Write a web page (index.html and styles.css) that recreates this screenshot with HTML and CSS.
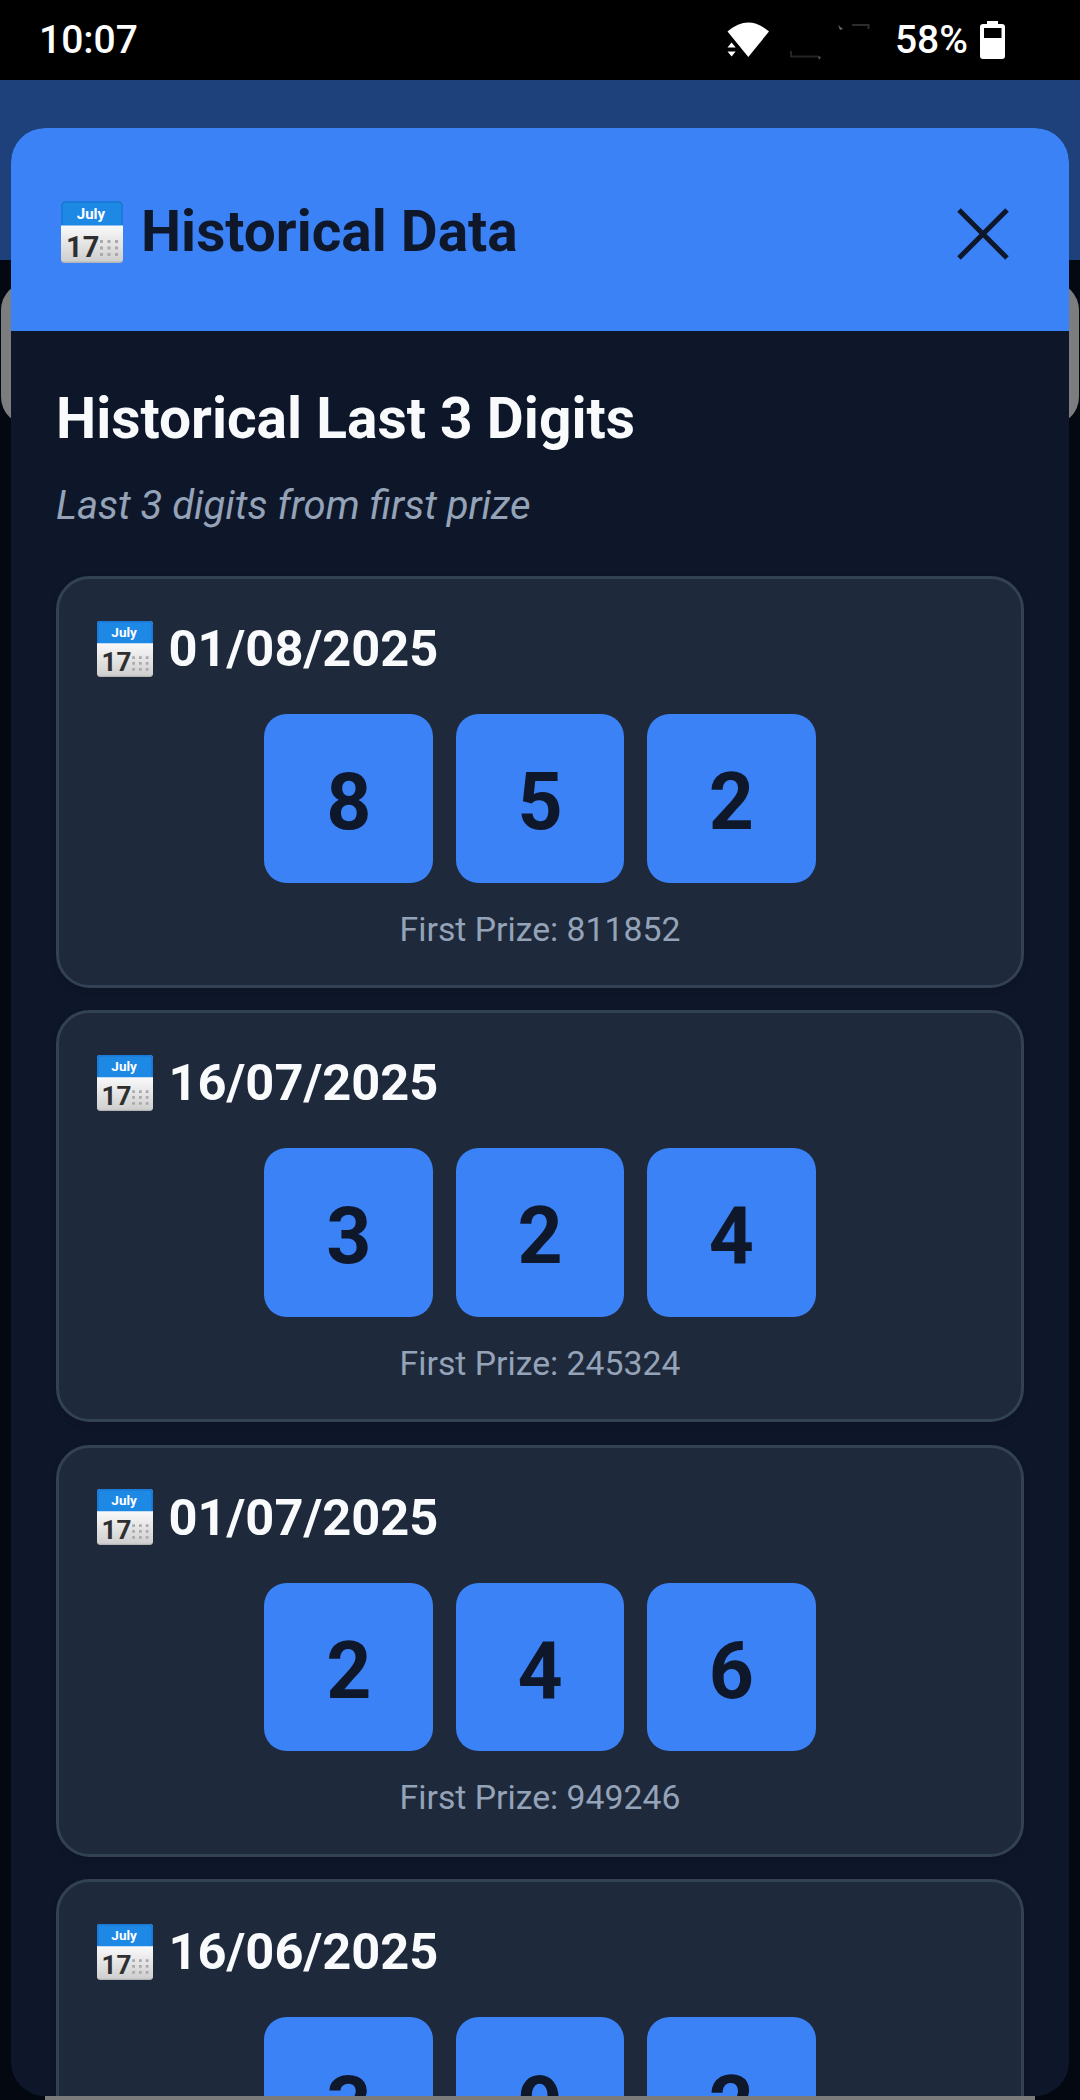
FILE: index.html
```html
<!DOCTYPE html>
<html lang="en">

<head>
    <meta charset="UTF-8">
    <meta name="viewport" content="width=device-width, initial-scale=1.0">
    <title>Historical Data</title>
    <link rel="stylesheet" href="styles.css">
</head>

<body>
    <!-- calendar icon, used in the header and the cards -->
    <svg class="defs" width="0" height="0">
        <defs>
            <linearGradient id="paper" x1="0" y1="0" x2="0" y2="1">
                <stop offset="0" stop-color="#fafafa" />
                <stop offset="1" stop-color="#cfcfcf" />
            </linearGradient>
            <symbol id="calendar" viewBox="0 0 62 62">
                <rect x="0" y="0" width="62" height="62" rx="3.5" fill="#b5b5b5" />
                <path d="M0 24H62V57.500Q62 60.500 59 60.500H3Q0 60.500 0 57.500Z" fill="url(#paper)" />
                <path d="M0 24.500V3.500Q0 0 3.500 0H58.500Q62 0 62 3.500V24.500Z" fill="#1e88e5" />
                <path d="M1 24V4Q1 1 4 1H58Q61 1 61 4V24" fill="none" stroke="#1976d2" stroke-width="1.500" />
                <text x="30" y="17.500" class="cal-month">July</text>
                <text x="5" y="55.500" class="cal-day">17</text>
                <g fill="#aaa">
                    <path d="M39 39h3v3h-3zM46.500 39h3v3h-3zM54 39h3v3h-3z" />
                    <path d="M39 45.500h3v3h-3zM46.500 45.500h3v3h-3zM54 45.500h3v3h-3z" />
                    <path d="M39 52h3v3h-3zM46.500 52h3v3h-3zM54 52h3v3h-3z" />
                </g>
            </symbol>
        </defs>
    </svg>

    <div class="status-bar">
        <span class="time">10:07</span>
        <div class="status-icons">
            <svg class="wifi" width="43" height="36" viewBox="0 0 43 36">
                <path d="M0.500 9.500Q21.500-8.500 42 9.500L21.300 35Z" fill="#fff" />
                <path d="M-1 25L4.500 17L13 25V36H-1Z" fill="#000" />
                <path d="M0.500 25.500L4.600 20.500L8.700 25.500ZM0.500 29.500H8.700L4.600 34.500Z" fill="#fff" />
            </svg>
            <svg class="signal" width="90" height="40" viewBox="0 0 90 40">
                <path d="M7 31V36.500H34" fill="none" stroke="#242424" stroke-width="2" />
                <path d="M34 36l3 1-2 3z" fill="#555" />
                <path d="M54 5l5 4-3 1z" fill="#666" />
                <path d="M68 5H84.500V9" fill="none" stroke="#2c2c2c" stroke-width="2" />
            </svg>
            <span class="percent">58%</span>
            <svg class="battery" width="25" height="38" viewBox="0 0 25 38">
                <path d="M7 0H18V3H22Q25 3 25 6V35Q25 38 22 38H3Q0 38 0 35V6Q0 3 3 3H7Z" fill="#fff" />
                <rect x="4" y="7" width="17.500" height="10" fill="#000" />
            </svg>
        </div>
    </div>

    <div class="screen">
        <!-- page behind the modal -->
        <div class="page-header"></div>
        <div class="page-card"></div>
        <div class="page-footer"></div>

        <div class="modal">
            <div class="modal-header">
                <h1><svg class="calendar"><use href="#calendar" /></svg>Historical Data</h1>
                <svg class="close" width="52" height="52" viewBox="0 0 52 52">
                    <path d="M2 2L50 50M50 2L2 50" stroke="#0f172a" stroke-width="5" />
                </svg>
            </div>
            <div class="modal-body">
                <h2>Historical Last 3 Digits</h2>
                <p class="subtitle">Last 3 digits from first prize</p>
                <div class="list">
                    <div class="card">
                        <h3><svg class="calendar"><use href="#calendar" /></svg>01/08/2025</h3>
                        <div class="digits"><span>8</span><span>5</span><span>2</span></div>
                        <p class="prize">First Prize: 811852</p>
                    </div>
                    <div class="card">
                        <h3><svg class="calendar"><use href="#calendar" /></svg>16/07/2025</h3>
                        <div class="digits"><span>3</span><span>2</span><span>4</span></div>
                        <p class="prize">First Prize: 245324</p>
                    </div>
                    <div class="card">
                        <h3><svg class="calendar"><use href="#calendar" /></svg>01/07/2025</h3>
                        <div class="digits"><span>2</span><span>4</span><span>6</span></div>
                        <p class="prize">First Prize: 949246</p>
                    </div>
                    <div class="card">
                        <h3><svg class="calendar"><use href="#calendar" /></svg>16/06/2025</h3>
                        <div class="digits"><span>3</span><span>9</span><span>2</span></div>
                    </div>
                </div>
            </div>
        </div>
    </div>
</body>

</html>
```

FILE: styles.css
```css
* {
    box-sizing: border-box;
}

body {
    margin: 0;
    width: 1080px;
    height: 2100px;
    overflow: hidden;
    background-color: #000;
    font-family: Roboto, sans-serif;
}

h1, h2, h3, p {
    margin: 0;
}

svg {
    display: block;
    flex-shrink: 0;
}

.defs {
    position: absolute;
}

.cal-month {
    font-size: 15px;
    font-weight: 700;
    fill: #fff;
    text-anchor: middle;
}

.cal-day {
    font-size: 29px;
    font-weight: 700;
    fill: #2f2f2f;
}

.status-bar {
    height: 80px;
    padding: 0 75px 0 39px;
    display: flex;
    justify-content: space-between;
    align-items: center;
    color: #fff;
    font-size: 39px;
    font-weight: 500;
    line-height: 80px;
}

.status-icons {
    display: flex;
    align-items: center;
}

.signal {
    margin: 0 21px 0 14px;
}

.battery {
    margin-left: 12px;
}

.screen {
    position: relative;
    height: 2020px;
    overflow: hidden;
    background-color: #030811;
}

.page-header {
    height: 180px;
    background-color: #1e417b;
}

.page-card {
    height: 143px;
    margin: 22px 1px 0;
    border-radius: 28px;
    background-color: #7c7d7e;
}

.page-footer {
    position: absolute;
    left: 45px;
    right: 45px;
    bottom: 0;
    height: 4px;
    background-color: #7b7b7b;
}

.modal {
    position: absolute;
    top: 48px;
    left: 11px;
    right: 11px;
    bottom: 4px;
    border-radius: 34px;
    overflow: hidden;
    background-color: #0e172a;
}

.modal-header {
    height: 203px;
    padding: 5px 60px 0 50px;
    display: flex;
    justify-content: space-between;
    align-items: center;
    background-color: #3b82f6;
    color: #0f172a;
}

h1 {
    display: flex;
    align-items: center;
    font-size: 56.8px;
    line-height: 66px;
}

h1 .calendar {
    width: 62px;
    height: 62px;
    margin-right: 18px;
}

.close {
    margin-top: 4px;
}

.modal-body {
    padding: 55px 45px 0;
}

h2 {
    color: #f8fafc;
    font-size: 56.9px;
    line-height: 66px;
}

.subtitle {
    margin-top: 31px;
    color: #94a3b8;
    font-size: 40px;
    font-style: italic;
    line-height: 46px;
}

.list {
    margin-top: 47px;
    display: flex;
    flex-direction: column;
    gap: 22.5px;
}

.card {
    height: 411.85px;
    padding: 30px 37.5px 0;
    border: 3px solid #334155;
    border-radius: 33.75px;
    background-color: #1e293b;
    box-shadow: 0 3px 6px rgba(0, 0, 0, 0.15);
}

h3 {
    display: flex;
    align-items: center;
    height: 79px;
    color: #f8fafc;
    font-size: 50.625px;
}

h3 .calendar {
    width: 56px;
    height: 56px;
    margin-right: 16px;
}

.digits {
    margin-top: 26px;
    display: flex;
    justify-content: center;
    gap: 22.5px;
}

.digits span {
    width: 168.75px;
    height: 168.75px;
    border-radius: 22.5px;
    background-color: #3b82f6;
    color: #0f172a;
    font-size: 78.75px;
    font-weight: 700;
    line-height: 176px;
    text-align: center;
}

.prize {
    margin-top: 27px;
    color: #94a3b8;
    font-size: 33.75px;
    line-height: 40px;
    text-align: center;
}
```
